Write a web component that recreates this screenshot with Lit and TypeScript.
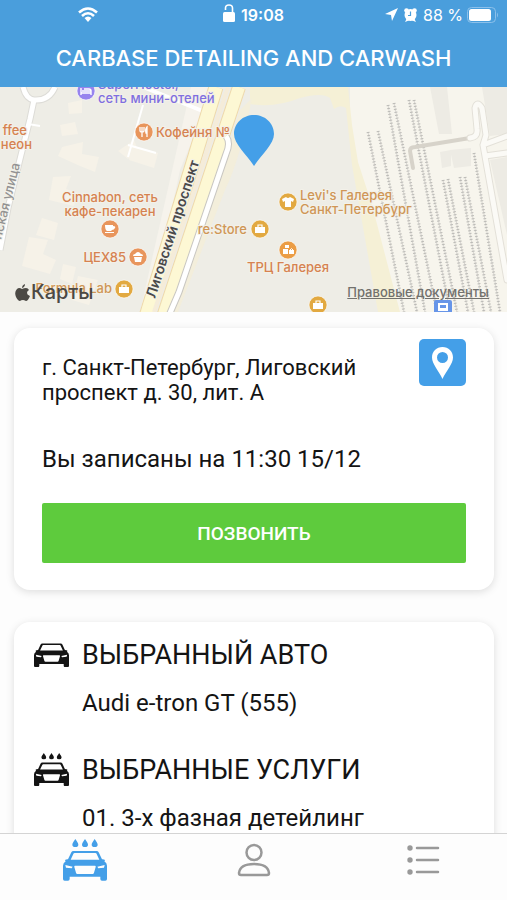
import { LitElement, html, css, svg } from "lit";
import { customElement, property } from "lit/decorators.js";

const CAR_BODY =
  "M31 36H101Q105 36 107 40L117 61Q120 60 125 62Q127 65 124 67Q132 72 132 80V120Q132 125 127 125H117Q112 125 112 120V113H20V120Q20 125 15 125H5Q0 125 0 120V80Q0 72 8 67Q5 65 7 62Q12 60 15 61L25 40Q27 36 31 36Z" +
  "M35 42Q32 42 31 45L23 62H109L101 45Q100 42 97 42Z" +
  "M7 78L29 83L26 88L9 86Z M125 78L103 83L106 88L123 86Z" +
  "M36 80Q33 80 34 84L39 101Q40 105 43 105H89Q92 105 93 101L98 84Q99 80 96 80Z";
const DROP = "c5 8 9 12 9 17a9 7 0 0 1 -18 0c0 -5 4 -9 9 -17z";

@customElement("car-icon")
export class CarIcon extends LitElement {
  @property({ type: Boolean }) wash = false;
  static styles = css`
    :host { display: block; }
    .glyph { display: block; width: 100%; fill: currentColor; }
  `;
  render() {
    return html`<svg class="glyph" viewBox=${this.wash ? "0 0 132 126" : "0 34 132 92"} aria-hidden="true">
      <path fill-rule="evenodd" d=${CAR_BODY} />
      ${this.wash ? svg`<path d=${`M37 0${DROP}M66 0${DROP}M95 0${DROP}`} />` : ""}
    </svg>`;
  }
}

type Poi = { x: number; y: number; color: string; kind: string };

const POIS: Poi[] = [
  { x: 86, y: 91, color: "#9784ee", kind: "bed" },
  { x: 144, y: 132, color: "#e8955c", kind: "food" },
  { x: 110, y: 229, color: "#e8955c", kind: "cup" },
  { x: 138, y: 257, color: "#e8955c", kind: "cake" },
  { x: 124, y: 289, color: "#e2a941", kind: "bag" },
  { x: 260, y: 229, color: "#e2a941", kind: "bag" },
  { x: 288, y: 202, color: "#e2a941", kind: "shirt" },
  { x: 288, y: 250, color: "#eb9d45", kind: "mall" },
  { x: 318, y: 305, color: "#e2a941", kind: "bag" },
];

const GLYPHS: Record<string, unknown> = {
  bed: svg`<path d="M-5 -3V4M-5 2H5V4M5 2V0H-4M-2 -2H3Q5 -2 5 0" fill="none" stroke="#fff" stroke-width="1.4"/>`,
  food: svg`<path d="M-4 -5V-1Q-4 0 -2 0V5M0 -5V-1Q0 0 -2 0V-5M3 5V-5Q1 -3 2 1H3" fill="none" stroke="#fff" stroke-width="1.3"/>`,
  cup: svg`<path d="M-5 -4H3V-3Q6 -3 5 -1Q4 1 2 1L1 2H-3Q-5 1 -5 -4ZM-5 3H4V4H-5Z" fill="#fff"/>`,
  cake: svg`<path d="M-5 -1Q-5 -3 -3 -3Q0 -7 3 -3Q5 -3 5 -1ZM-4 0H4L3 5H-3Z" fill="#fff"/>`,
  bag: svg`<path d="M-5 -2H5V4H-5Z" fill="#fff"/><path d="M-2 -2V-4H2V-2" fill="none" stroke="#fff" stroke-width="1.2"/>`,
  shirt: svg`<path d="M-2 -5Q0 -3 2 -5L6 -3L5 0L3 -1V5H-3V-1L-5 0L-6 -3Z" fill="#fff"/>`,
  mall: svg`<path d="M-5 -1H0V4H-5ZM-3 -5H1V-2H-3ZM1 0H6V4H1Z" fill="#fff"/><path d="M2 0Q3.500 -3 5 0" fill="none" stroke="#fff"/>`,
};

@customElement("street-map")
export class StreetMap extends LitElement {
  static styles = css`
    :host { display: block; position: relative; height: 225px; overflow: hidden; background: #eeede6; }
    .map { display: block; width: 100%; height: 100%; }
    .label { font: 500 13px Inter, "Noto Sans", sans-serif; stroke: #f3f1e9; stroke-width: 2px; paint-order: stroke; }
    .road { font-size: 14px; font-weight: 600; }
    .food { fill: #d68250; }
    .shop { fill: #cf9656; }
    .hotel { fill: #806fe0; }
    .street { fill: #929292; }
    .avenue { fill: #4a4a4a; }
    .mid { text-anchor: middle; }
    .end { text-anchor: end; }
    .rail { fill: none; stroke: #dad8d3; stroke-width: 1; }
    .ties { fill: none; stroke: #bcbbb7; stroke-width: 3; stroke-dasharray: 1 2; }
    .overlay { position: absolute; left: 15px; right: 18px; bottom: 8px; display: flex; justify-content: space-between; align-items: center; }
    .brand { display: flex; align-items: center; gap: 1px; font: 500 20px/24px Inter, "Noto Sans", sans-serif; color: #4b4944; }
    .apple { width: 15px; height: 17px; fill: currentColor; }
    .legal { font: 500 13px/16px Inter, "Noto Sans", sans-serif; color: #72716d; }
  `;
  render() {
    const rails = "M368 132L404 312M378 131L417 312M388 105L425 312M394 103L437 312M409 100L450 312M414 100L457 312M443 180L468 312M448 179L474 312M460 177L484 312M465 177L491 312M474 153L500 312";
    return html`
      <svg class="map" viewBox="0 87 507 225" preserveAspectRatio="xMidYMid slice" role="img" aria-label="Карта">
        <path fill="#eeede6" d="M0 87H507V312H0Z" />
        <path fill="#f7f5ed" d="M350 87H507V312H398L358 165L350 120Z" />
        <path fill="#f5f0d6" d="M250 87H348L352 125L358 162L372 205L400 312H378L352 165L346 108Q340 104 334 109L330 98Q322 92 300 98Q275 108 250 104Z" />
        <path fill="#f3eedb" d="M215 190L240 110L252 98Q240 160 225 190L178 312H163Z" />
        <path fill="#f6f3ec" d="M180 170L205 110L208 87H191L140 312H150Z" />
        <path fill="#edebe4" d="M430 87H447L452 134H439ZM440 152L451 150V166L442 168ZM450 150L471 148V166L454 168ZM482 87H507V134L490 136ZM490 160L507 157V235Z" />
        <path fill="#f6f2e8" d="M60 125L75 122L78 134L62 136ZM62 147L83 142L82 154L99 157L95 172L80 166L58 156ZM53 177L71 176L66 189L78 193L74 206L49 200ZM42 218L58 223L54 240L36 235ZM29 237L48 240L43 254L56 260L50 274L22 266ZM68 103L82 100V113L69 114ZM130 146L158 153L154 168L129 160ZM118 151L134 140L138 150L128 159ZM63 264L76 267L72 284L60 279ZM78 276L98 280L89 305L72 300Z" />
        <g fill="none" stroke-linejoin="round">
          <path stroke="#dddcd7" stroke-width="7" d="M23 87Q26 99 34 100Q49 101 55 87M34 100L30 119L21 155L8 208L0 250" />
          <path stroke="#fff" stroke-width="5" d="M23 87Q26 99 34 100Q49 101 55 87M34 100L30 119L21 155L8 208L0 250" />
          <path stroke="#fff" stroke-width="4" d="M143 87L205 112" />
          <path stroke="#fff" stroke-width="2" d="M143 105L128 157M128 145L156 153M28 124L40 126" />
          <path stroke="#eed9ac" stroke-width="15" d="M216 87L145 320" />
          <path stroke="#fdf8d4" stroke-width="13" d="M216 87L145 320" />
          <path stroke="#eed9ac" stroke-width="14" d="M239 87L162 320" />
          <path stroke="#fdf8d4" stroke-width="12" d="M239 87L162 320" />
          <path stroke="#c9c7c2" stroke-width="7" d="M226 136Q231 143 226 154L179 292L167 320" />
          <path stroke="#fff" stroke-width="5" d="M226 136Q231 143 226 154L179 292L167 320" />
          <path stroke="#f5ecd9" stroke-width="4" d="M228 87L154 312" />
        </g>
        <path class="rail" d=${rails} />
        <path class="ties" d=${rails} />
        <g fill="none" stroke-linecap="round" stroke-linejoin="round">
          <path stroke="#d7d3ca" stroke-width="4" d="M413 168L410 151Q410 147 415 147L470 138" />
          <path stroke="#e3e0d8" stroke-width="7" d="M470 138Q478 137 477 129L475 108Q477 100 482 108L486 135L483 145L507 280M483 145L507 136M485 156L507 153" />
          <path stroke="#fbfaf6" stroke-width="5" d="M470 138Q478 137 477 129L475 108Q477 100 482 108L486 135L483 145L507 280M483 145L507 136M485 156L507 153" />
        </g>
        <rect x="434" y="300" width="18" height="14" rx="2" fill="#6795e8" />
        <path fill="#fff" fill-rule="evenodd" d="M438 303H448V311H438ZM440 305V308H446V305Z" />
        <text class="label hotel" x="98" y="89">SuperHostel,</text>
        <text class="label hotel" x="98" y="103">сеть мини-отелей</text>
        <text class="label food" x="156" y="137">Кофейня №</text>
        <text class="label food end" x="27" y="135">ffee</text>
        <text class="label food end" x="32" y="149">неон</text>
        <text class="label food mid" x="110" y="202">Cinnabon, сеть</text>
        <text class="label food mid" x="110" y="216">кафе-пекарен</text>
        <text class="label food end" x="126" y="262">ЦЕХ85</text>
        <text class="label shop end" x="112" y="293">Formula Lab</text>
        <text class="label shop end" x="247" y="234">re:Store</text>
        <text class="label shop" x="300" y="200">Levi's Галерея</text>
        <text class="label shop" x="300" y="214">Санкт-Петербург</text>
        <text class="label food mid" x="288" y="272">ТРЦ Галерея</text>
        <text class="label street end" transform="translate(20 164) rotate(-76)">нская улица</text>
        <text class="label road avenue" transform="translate(155 299) rotate(-72)">Лиговский проспект</text>
        ${POIS.map((p) => svg`<g transform=${`translate(${p.x} ${p.y})`}>
          <circle r="9" fill=${p.color} stroke="#fff" stroke-opacity=".6"/>${GLYPHS[p.kind]}</g>`)}
        <path fill="#449fe8" d="M254 115C243 115 234 123 234 134C234 144 246 154 254 166C262 154 274 144 274 134C274 123 265 115 254 115Z" />
      </svg>
      <div class="overlay">
        <span class="brand">
          <svg class="apple" viewBox="0 0 15 17" aria-hidden="true"><path d="M10 0Q10 3 7 4Q7 1 10 0ZM7 5Q9 4 11 4Q13 4 14 6Q12 7 12 9Q12 11 15 12Q13 17 11 17Q9 16 8 16Q6 16 5 17Q3 17 1 13Q-1 8 2 5Q4 3 7 5Z" /></svg>
          Карты
        </span>
        <a class="legal" href="#legal">Правовые документы</a>
      </div>`;
  }
}

@customElement("app-root")
export class AppRoot extends LitElement {
  static styles = css`
    :host { display: flex; flex-direction: column; height: 100vh; background: #fdfdfd; color: #141414; font-family: Roboto, "Noto Sans", sans-serif; }
    .header { flex: none; background: #4a9edc; color: #fff; font-family: Inter, "Noto Sans", sans-serif; }
    .status { display: grid; grid-template-columns: 1fr auto 1fr; align-items: center; height: 29px; padding: 0 8px; font-size: 16px; font-weight: 500; }
    .wifi { width: 20px; height: 15px; margin-left: 70px; }
    .clock { display: flex; align-items: center; gap: 6px; font-weight: 600; }
    .lock { width: 12px; height: 18px; margin-bottom: 4px; }
    .power { display: flex; align-items: center; justify-content: flex-end; gap: 6px; }
    .level { font-weight: 400; }
    .arrow { width: 13px; height: 13px; }
    .alarm { width: 13px; height: 14px; }
    .battery { width: 32px; height: 16px; margin-left: -2px; }
    .title { margin: 0; height: 58px; line-height: 58px; text-align: center; font-size: 22px; font-weight: 500; white-space: nowrap; }
    .content { flex: 1; min-height: 0; overflow-y: auto; scrollbar-width: none; }
    .cards { display: flex; flex-direction: column; gap: 32px; padding: 16px 13px 32px 14px; }
    .card { background: #fff; border-radius: 16px; box-shadow: 0 2px 8px rgba(0, 0, 0, 0.13); }
    .booking { padding: 11px 28px 27px; }
    .place { display: flex; justify-content: space-between; align-items: flex-start; gap: 24px; }
    .address { margin: 0; padding-top: 16px; font-size: 22px; line-height: 25px; max-width: 330px; }
    .locate { flex: none; width: 47px; height: 47px; padding: 0; border: 0; border-radius: 5px; background: #449fe8; display: grid; place-items: center; }
    .pin { width: 21px; height: 32px; fill: #fff; }
    .when { margin: 40px 0 30px; font-size: 24px; line-height: 28px; }
    .call { display: block; width: 100%; height: 60px; border: 0; border-radius: 2px; background: #5ecb3d; color: #fff; font: 500 19px Roboto, "Noto Sans", sans-serif; }
    .details { padding: 17px 20px 32px; display: flex; flex-direction: column; gap: 36px; }
    .entry { display: grid; grid-template-columns: 35px 1fr; column-gap: 13px; row-gap: 18px; align-items: center; }
    .heading { margin: 0; font-size: 27px; font-weight: 400; line-height: 32px; }
    .value { grid-column: 2; margin: 0; font-size: 24px; line-height: 28px; }
    .tabs { flex: none; display: grid; grid-template-columns: repeat(3, 1fr); height: 52px; padding-bottom: 14px; border-top: 1px solid #d4d4d4; background: #fdfdfd; }
    .tab { display: grid; place-items: center; color: #999; }
    .active { color: #449fe8; }
    .wash { width: 44px; }
    .user { width: 34px; height: 34px; }
    .list { width: 34px; height: 32px; }
    .line { fill: none; stroke: currentColor; stroke-width: 2.500; stroke-linecap: round; stroke-linejoin: round; }
  `;
  render() {
    return html`
      <header class="header">
        <div class="status">
          <svg class="wifi" viewBox="0 0 20 15" aria-label="Wi-Fi"><g fill="none" stroke="#fff" stroke-width="2.600"><path d="M1 5.500Q10 -2.500 19 5.500" /><path d="M4 9Q10 3.500 16 9" /></g><path fill="#fff" d="M6.500 11Q10 8 13.500 11L10 15Z" /></svg>
          <span class="clock">
            <svg class="lock" viewBox="0 0 12 18" aria-hidden="true"><rect y="8" width="12" height="10" rx="1.500" fill="#fff" /><path d="M2.500 6V4Q2.500 1 6 1T9.500 4V9" fill="none" stroke="#fff" stroke-width="1.600" /></svg>
            19:08
          </span>
          <span class="power">
            <svg class="arrow" viewBox="0 0 13 13" aria-hidden="true"><path fill="#fff" d="M0 6L13 0L7 13L6 7Z" /></svg>
            <svg class="alarm" viewBox="0 0 13 14" aria-hidden="true"><g fill="#fff"><circle cx="6.500" cy="7" r="6" /><circle cx="2.500" cy="2.500" r="2.300" /><circle cx="10.500" cy="2.500" r="2.300" /><path d="M1 14L3 10L6 12ZM12 14L10 10L7 12Z" /></g><path d="M6.500 3.500V7.500H4" fill="none" stroke="#4a9edc" stroke-width="1.200" /></svg>
            <span class="level">88 %</span>
            <svg class="battery" viewBox="0 0 32 16" aria-hidden="true"><rect x=".5" y=".5" width="28" height="15" rx="4" fill="none" stroke="#8cc0ea" /><rect x="2" y="2" width="22" height="12" rx="2.500" fill="#fff" /><path d="M30 5.500Q32 8 30 10.500Z" fill="#8cc0ea" /></svg>
          </span>
        </div>
        <h1 class="title">CARBASE DETAILING AND CARWASH</h1>
      </header>
      <main class="content">
        <street-map></street-map>
        <div class="cards">
          <section class="card booking">
            <div class="place">
              <p class="address">г. Санкт-Петербург, Лиговский проспект д. 30, лит. А</p>
              <button class="locate" type="button" aria-label="Показать на карте">
                <svg class="pin" viewBox="0 0 21 32" aria-hidden="true"><path fill-rule="evenodd" d="M10.500 0C4.500 0 0 4.500 0 10.500C0 17 7 24 10.500 32C14 24 21 17 21 10.500C21 4.500 16.500 0 10.500 0ZM10.500 5A5.500 5.500 0 1 1 10.500 16A5.500 5.500 0 1 1 10.500 5Z" /></svg>
              </button>
            </div>
            <p class="when">Вы записаны на 11:30 15/12</p>
            <button class="call" type="button">ПОЗВОНИТЬ</button>
          </section>
          <section class="card details">
            <div class="entry">
              <car-icon></car-icon>
              <h2 class="heading">ВЫБРАННЫЙ АВТО</h2>
              <p class="value">Audi e-tron GT (555)</p>
            </div>
            <div class="entry">
              <car-icon wash></car-icon>
              <h2 class="heading">ВЫБРАННЫЕ УСЛУГИ</h2>
              <p class="value">01. 3-х фазная детейлинг</p>
            </div>
          </section>
        </div>
      </main>
      <nav class="tabs">
        <a class="tab active" href="#wash" aria-label="Мойка"><car-icon class="wash" wash></car-icon></a>
        <a class="tab" href="#profile" aria-label="Профиль"><svg class="user line" viewBox="0 0 34 34"><circle cx="17" cy="9.500" r="7.500" /><path d="M4 32Q2 32 2 30Q3 21 17 21T32 30Q32 32 30 32Z" /></svg></a>
        <a class="tab" href="#list" aria-label="Список"><svg class="list line" viewBox="0 0 34 32"><path d="M11 4H32M11 16H32M11 28H32" /><g fill="currentColor" stroke="none"><circle cx="4" cy="4" r="2.700" /><circle cx="4" cy="16" r="2.700" /><circle cx="4" cy="28" r="2.700" /></g></svg></a>
      </nav>`;
  }
}
